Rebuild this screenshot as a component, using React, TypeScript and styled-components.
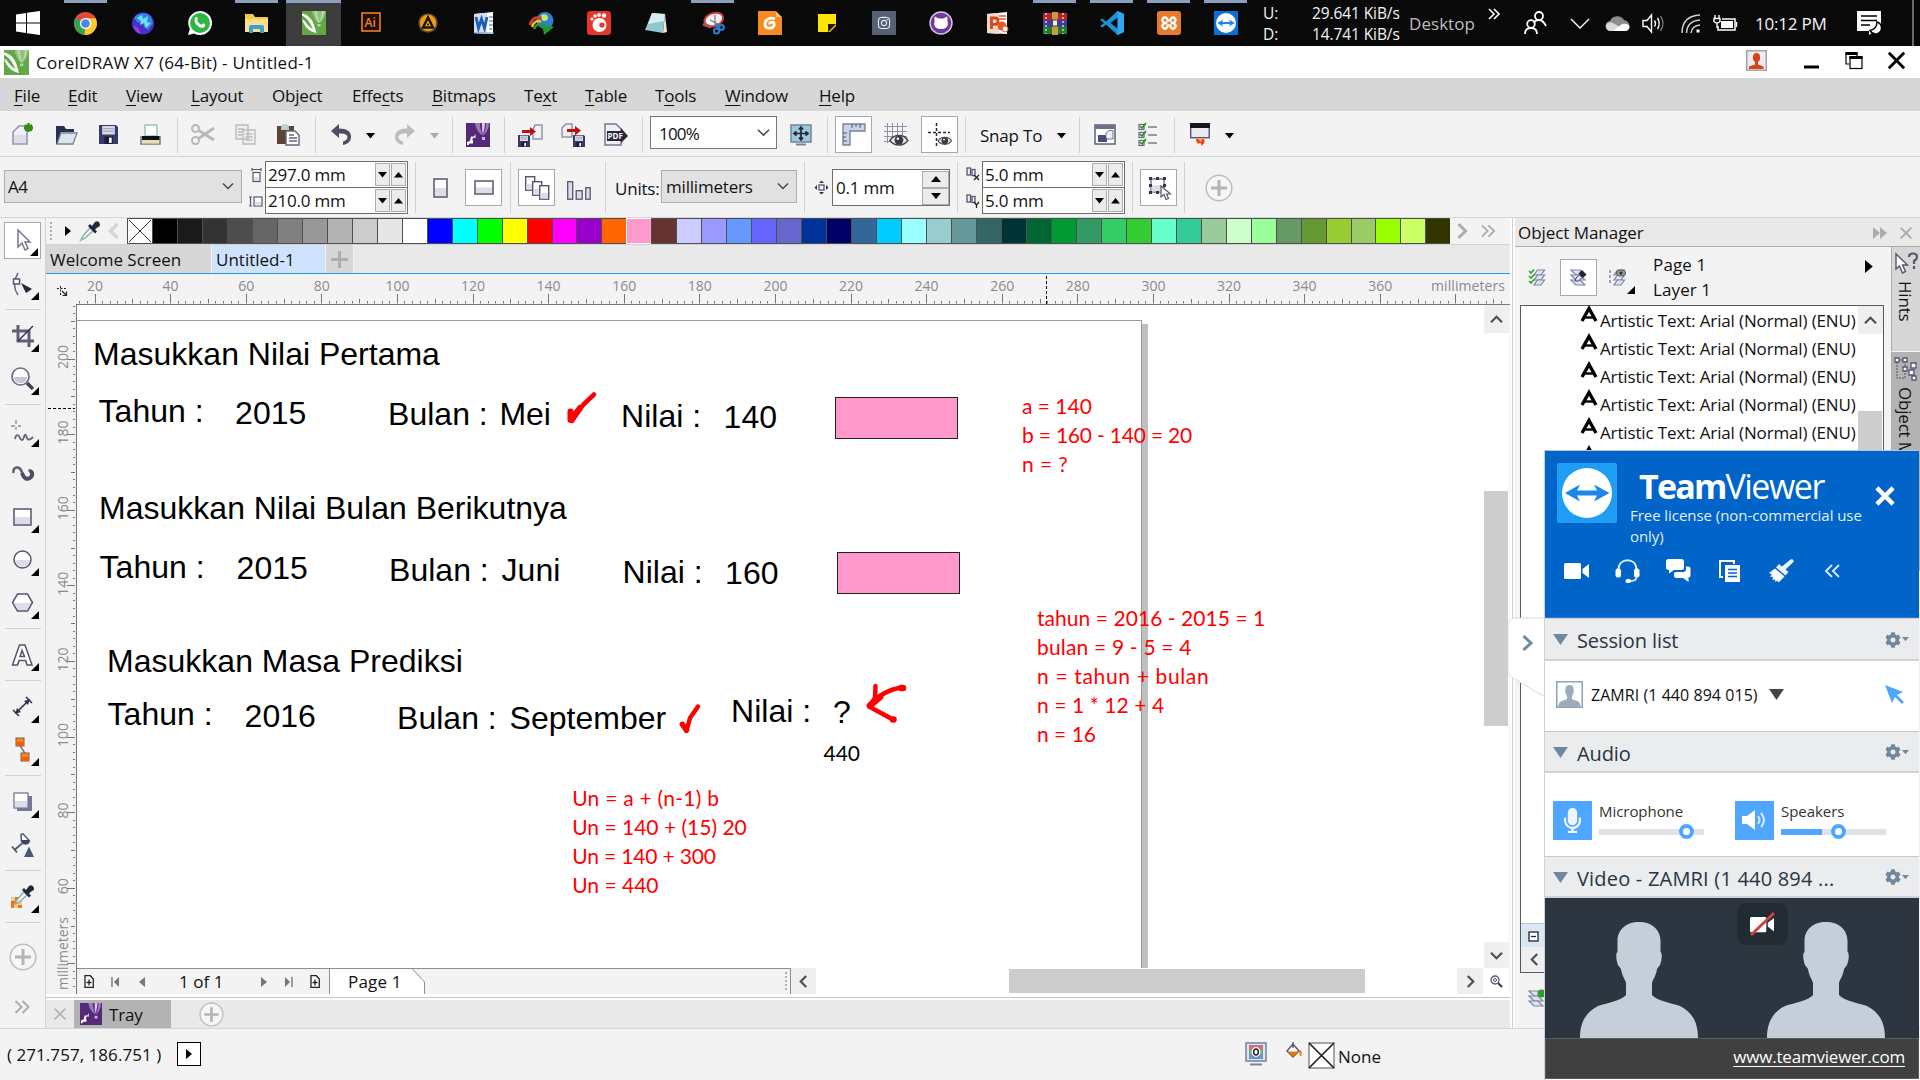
import React from "react";
import styled, { createGlobalStyle, css } from "styled-components";
import { FaCog, FaMicrophone, FaInstagram } from "react-icons/fa";

const Global = createGlobalStyle`
  *, *::before, *::after { box-sizing: border-box; }
  html, body { margin: 0; padding: 0; overflow: hidden; background: #f3f3f3; }
  svg { display: block; flex: none; overflow: visible; }
`;

const UI = `"Open Sans", "Noto Sans", sans-serif`;
const INK = "#55556e";
const PALE = "#dcdde8";

/* ---------- shell ---------- */
const Screen = styled.div`
  position: relative;
  width: 1920px;
  height: 1080px;
  display: flex;
  flex-direction: column;
  font: 17px/24px ${UI};
  color: #111;
  background: #f3f3f3;
  overflow: hidden;
  white-space: nowrap;
`;

const Label = styled.span<{ $w?: number; $ml?: number; $size?: number; $ls?: number; $c?: string; $mt?: number }>`
  flex: none;
  display: block;
  ${p => p.$w !== undefined && css`width: ${p.$w}px;`}
  margin-left: ${p => p.$ml ?? 0}px;
  margin-top: ${p => p.$mt ?? 0}px;
  font-size: ${p => p.$size ?? 17}px;
  letter-spacing: ${p => p.$ls ?? -0.2}px;
  color: ${p => p.$c ?? "inherit"};
`;

const Slot = styled.span<{ $w: number; $ml?: number; $mt?: number }>`
  position: relative;
  flex: none;
  width: ${p => p.$w}px;
  margin-left: ${p => p.$ml ?? 0}px;
  margin-top: ${p => p.$mt ?? 0}px;
  display: flex;
  align-items: center;
  justify-content: center;
`;

/* ---------- taskbar ---------- */
const Taskbar = styled.header`
  flex: none;
  height: 46px;
  display: flex;
  align-items: center;
  background: #090909;
  color: #f4f4f4;
`;
const TaskCell = styled.div<{ $open?: boolean; $active?: boolean }>`
  flex: none;
  width: ${p => (p.$active ? 55 : 43)}px;
  margin: 0 ${p => (p.$active ? 1 : 7)}px;
  height: 46px;
  display: flex;
  align-items: center;
  justify-content: center;
  background: ${p => (p.$active ? "#3c3c3c" : "transparent")};
  border-top: 3px solid ${p => (p.$open || p.$active ? "#8aa0bd" : "transparent")};
  padding-bottom: 3px;
`;
const NetCol = styled.div<{ $ml: number; $w: number }>`
  flex: none;
  margin-left: ${p => p.$ml}px;
  width: ${p => p.$w}px;
  display: flex;
  flex-direction: column;
  font-size: 15.5px;
  line-height: 21px;
  letter-spacing: -0.1px;
  margin-top: 2px;
`;
const ShowDesk = styled.div`
  width: 2px;
  height: 46px;
  margin-left: 30px;
  background: #6a6a6a;
`;

/* ---------- title and menu ---------- */
const TitleBar = styled.div`
  flex: none;
  height: 32px;
  padding-left: 4px;
  display: flex;
  align-items: center;
  background: #fff;
`;
const Spring = styled.div`
  flex: 1;
`;
const MenuBar = styled.nav`
  flex: none;
  height: 33px;
  padding: 2px 0 0 14px;
  display: flex;
  align-items: center;
  background: #d7d7d7;
  u { text-underline-offset: 3px; text-decoration-thickness: 1px; }
`;

/* ---------- toolbars ---------- */
const Bar = styled.div<{ $h: number; $pt: number }>`
  flex: none;
  height: ${p => p.$h}px;
  padding-top: ${p => p.$pt}px;
  display: flex;
  align-items: center;
  border-bottom: 1px solid #d6d6d6;
  background: #f3f3f3;
`;
const Sep = styled.i<{ $ml: number; $h?: number }>`
  flex: none;
  width: 1px;
  height: ${p => p.$h ?? 36}px;
  margin-left: ${p => p.$ml}px;
  background: #d2d2d2;
`;
const Pressed = styled.span<{ $ml?: number }>`
  flex: none;
  width: 37px;
  height: 37px;
  margin-left: ${p => p.$ml ?? 0}px;
  display: flex;
  align-items: center;
  justify-content: center;
  background: #fff;
  border: 1px solid #a9a9a9;
`;
const Combo = styled.div<{ $w: number; $ml: number; $white?: boolean; $pad: number }>`
  flex: none;
  width: ${p => p.$w}px;
  height: 33px;
  margin-left: ${p => p.$ml}px;
  margin-top: ${p => (p.$white ? -4 : -3)}px;
  padding: 0 ${p => (p.$white ? 7 : 8)}px 0 ${p => p.$pad}px;
  display: flex;
  align-items: center;
  justify-content: space-between;
  border: 1px solid ${p => (p.$white ? "#777" : "#adadad")};
  background: ${p => (p.$white ? "#fff" : "#e1e1e1")};
`;
const Pair = styled.div`
  flex: none;
  width: 143px;
  height: 53px;
  margin-left: 2px;
  display: flex;
  flex-direction: column;
  border: 1px solid #6e6e6e;
  background: #fff;
`;
const PairRow = styled.div`
  flex: 1;
  display: flex;
  align-items: center;
  padding: 0 1px 0 2px;
  & + & { border-top: 1px solid #6e6e6e; }
`;
const Spin = styled.span<{ $w: number; $h: number }>`
  flex: none;
  width: ${p => p.$w}px;
  height: ${p => p.$h}px;
  margin-left: 1px;
  display: flex;
  align-items: center;
  justify-content: center;
  background: #ececec;
  border: 1px solid #adadad;
`;
const IconPairCol = styled.div<{ $ml: number }>`
  flex: none;
  width: 14px;
  height: 53px;
  margin-left: ${p => p.$ml}px;
  display: flex;
  flex-direction: column;
  justify-content: space-around;
  align-items: center;
`;
const NudgeBox = styled.div`
  flex: none;
  width: 118px;
  height: 37px;
  margin-left: 4px;
  padding: 0 0 0 3px;
  display: flex;
  align-items: center;
  justify-content: space-between;
  border: 1px solid #6e6e6e;
  background: #fff;
`;
const SpinCol = styled.div`
  display: flex;
  flex-direction: column;
`;

/* ---------- workspace ---------- */
const Work = styled.main`
  flex: none;
  height: 811px;
  display: flex;
  border-bottom: 1px solid #d6d6d6;
`;
const Toolbox = styled.aside`
  flex: none;
  width: 46px;
  padding-top: 1px;
  display: flex;
  flex-direction: column;
  align-items: center;
  border-right: 1px solid #d2d2d2;
`;
const ToolCell = styled.div<{ $on?: boolean }>`
  position: relative;
  flex: none;
  width: 37px;
  height: 37px;
  margin: 3px 0;
  display: flex;
  align-items: center;
  justify-content: center;
  ${p => p.$on && css`background: #fff; border: 1px solid #a9a9a9;`}
`;
const Flyout = styled.i<{ $r?: number; $b?: number }>`
  position: absolute;
  right: ${p => p.$r ?? 2}px;
  bottom: ${p => p.$b ?? 2}px;
  border-style: solid;
  border-width: 0 0 8px 8px;
  border-color: transparent transparent #000 transparent;
`;
const ToolSep = styled.i`
  flex: none;
  width: 36px;
  height: 9px;
  border: solid #f3f3f3;
  border-width: 4px 0;
  background: #d2d2d2;
`;
const Center = styled.section`
  flex: none;
  width: 1464px;
  display: flex;
  flex-direction: column;
`;
const Palette = styled.div`
  flex: none;
  height: 27px;
  display: flex;
  align-items: center;
  border-bottom: 1px solid #d2d2d2;
`;
const Swatches = styled.div`
  flex: none;
  width: 1323px;
  height: 26px;
  margin-left: 7px;
  display: flex;
  border: solid #4f4f4f;
  border-width: 1px 0;
`;
const Swatch = styled.span<{ $c: string; $sel?: boolean }>`
  flex: 1;
  height: 24px;
  background: ${p => p.$c};
  border-left: 1px solid ${p => (p.$sel ? "#fff" : "#4f4f4f")};
  ${p => p.$sel && css`box-shadow: 1px 0 0 #fff, 0 1px 0 #fff, 0 -1px 0 #fff;`}
`;
const Tabs = styled.div`
  flex: none;
  height: 29px;
  display: flex;
  align-items: stretch;
  background: #e9e9e9;
  border-bottom: 1px solid #1f9fea;
`;
const Tab = styled.div<{ $w: number; $bg: string; $pad?: number }>`
  flex: none;
  width: ${p => p.$w}px;
  padding-left: ${p => p.$pad ?? 4}px;
  padding-top: 1px;
  display: flex;
  align-items: center;
  background: ${p => p.$bg};
  border-right: 1px solid #f3f3f3;
`;
const RulerRow = styled.div`
  flex: none;
  height: 31px;
  display: flex;
`;
const Body = styled.div`
  flex: none;
  height: 689px;
  display: flex;
`;
const VRuler = styled.div`
  flex: none;
  width: 31px;
  border-right: 1px solid #777;
`;
const View = styled.div`
  flex: none;
  width: 1432px;
  display: flex;
  flex-direction: column;
`;
const CanvasRow = styled.div`
  flex: none;
  height: 663px;
  display: flex;
`;
const Canvas = styled.div`
  position: relative;
  width: 1407px;
  background: #fff;
  overflow: hidden;
`;
const Page = styled.div`
  position: absolute;
  left: -2px;
  top: 15px;
  width: 1067px;
  height: 700px;
  border: 1px solid #999;
  box-shadow: 6px 4px 0 #bfbfbf;
  background: #fff;
`;
const Art = styled.div<{ $x: number; $y: number }>`
  position: absolute;
  left: ${p => p.$x - 76.4}px;
  top: ${p => p.$y - 332}px;
  font: 32px/32px "Liberation Sans", Arial, sans-serif;
  color: #000;
`;
const Note = styled.div<{ $x: number; $y: number; $ls?: number; $black?: boolean }>`
  position: absolute;
  left: ${p => p.$x - 77}px;
  top: ${p => p.$y - 328.5}px;
  font: 21px/29px Lato, sans-serif;
  letter-spacing: ${p => p.$ls ?? 0}px;
  color: ${p => (p.$black ? "#000" : "#ff0000")};
`;
const Box = styled.div<{ $x: number; $y: number }>`
  position: absolute;
  left: ${p => p.$x - 77}px;
  top: ${p => p.$y - 305}px;
  width: 123px;
  height: 42px;
  background: #ff99cc;
  border: 1px solid #222;
`;
const Ink = styled.svg`
  position: absolute;
  left: -77px;
  top: -305px;
`;
const VScroll = styled.div<{ $w: number }>`
  flex: none;
  width: ${p => p.$w}px;
  display: flex;
  flex-direction: column;
  background: #fff;
`;
const ScrollBtn = styled.span<{ $w: number; $h: number }>`
  flex: none;
  width: ${p => p.$w}px;
  height: ${p => p.$h}px;
  display: flex;
  align-items: center;
  justify-content: center;
  background: #efefef;
`;
const Thumb = styled.i<{ $w: number; $h: number; $ml?: number; $mt?: number }>`
  flex: none;
  width: ${p => p.$w}px;
  height: ${p => p.$h}px;
  margin-left: ${p => p.$ml ?? 0}px;
  margin-top: ${p => p.$mt ?? 0}px;
  background: #cdcdcd;
`;
const BottomRow = styled.div`
  flex: none;
  height: 26px;
  display: flex;
  align-items: center;
  background: #fff;
`;
const PageNav = styled.div`
  flex: none;
  width: 714px;
  height: 26px;
  display: flex;
  align-items: center;
  background: #f3f3f3;
  border: solid #8f8f8f;
  border-width: 1px 1px 0 0;
`;
const PageTab = styled.div`
  flex: none;
  width: 96px;
  height: 25px;
  margin-left: 9px;
  padding-left: 18px;
  display: flex;
  align-items: center;
  background: #fff;
  clip-path: polygon(0 0, 84px 0, 100% 13px, 100% 100%, 0 100%);
  border-left: 1px solid #8f8f8f;
`;
const PageEdge = styled.svg`
  position: relative;
  margin-left: -13px;
`;
const Grip = styled.i`
  flex: none;
  width: 2px;
  height: 19px;
  margin-right: 3px;
  background: repeating-linear-gradient(#b0b0b0 0 2px, transparent 2px 4px);
`;
const Rule = styled.i`
  flex: none;
  height: 6px;
  border: solid #fff;
  border-width: 3px 0 2px;
  background: #c4c4c4;
`;
const Tray = styled.div`
  flex: none;
  height: 28px;
  display: flex;
  align-items: center;
  background: #e9e9e9;
`;
const TrayTab = styled.div`
  flex: none;
  width: 97px;
  height: 28px;
  margin-left: 8px;
  padding-left: 6px;
  display: flex;
  align-items: center;
  background: #b3b3b3;
`;

/* ---------- docker ---------- */
const Split = styled.i`
  flex: none;
  width: 5px;
  border: solid #fff;
  border-width: 0 2px;
  background: #d0d0d0;
`;
const Docker = styled.aside`
  flex: none;
  width: 405px;
  display: flex;
  flex-direction: column;
`;
const DockHead = styled.div`
  flex: none;
  height: 29px;
  padding: 2px 8px 0 3px;
  display: flex;
  align-items: center;
  background: #e9e9e9;
  border-bottom: 1px solid #adadad;
`;
const DockBody = styled.div`
  flex: 1;
  display: flex;
`;
const DockMain = styled.div`
  flex: none;
  width: 376px;
  display: flex;
  flex-direction: column;
`;
const DockTools = styled.div`
  flex: none;
  height: 58px;
  padding: 3px 0 0 14px;
  display: flex;
  align-items: center;
`;
const PageInfo = styled.div`
  flex: none;
  width: 212px;
  margin-left: 19px;
  margin-top: -1px;
  display: flex;
  flex-direction: column;
  gap: 1px;
  line-height: 24px;
`;
const ListBox = styled.div`
  flex: none;
  width: 364px;
  height: 668px;
  margin-left: 5px;
  display: flex;
  border: 1px solid #5a5a5a;
  background: #fff;
`;
const ListCol = styled.div`
  width: 337px;
  display: flex;
  flex-direction: column;
`;
const ListRow = styled.div`
  flex: none;
  height: 28px;
  padding-left: 60px;
  display: flex;
  align-items: center;
`;
const GroupRow = styled.div`
  flex: none;
  height: 24px;
  padding: 6px 0 0 7px;
  background: #d9e6f3;
  border-top: 1px solid #b5c6d8;
`;
const HScrollRow = styled.div`
  flex: none;
  height: 25px;
  background: #efefef;
`;
const DockFoot = styled.div`
  flex: 1;
  padding: 17px 0 0 13px;
`;
const SideTabs = styled.div`
  flex: none;
  width: 29px;
  display: flex;
  flex-direction: column;
`;
const SideTab = styled.div<{ $h: number; $on?: boolean }>`
  flex: none;
  height: ${p => p.$h}px;
  padding-top: 6px;
  display: flex;
  flex-direction: column;
  align-items: center;
  gap: 7px;
  overflow: hidden;
  background: ${p => (p.$on ? "#b3b3b3" : "#d7d7d7")};
  border-left: 1px solid #adadad;
  border-bottom: 1px solid #f3f3f3;
`;
const Upright = styled.span`
  writing-mode: vertical-rl;
  letter-spacing: -0.2px;
  line-height: 24px;
  margin-right: 2px;
`;

/* ---------- status ---------- */
const Status = styled.footer`
  flex: 1;
  padding-left: 7px;
  padding-top: 1px;
  display: flex;
  align-items: center;
`;
const PlayBox = styled.span`
  flex: none;
  width: 24px;
  height: 24px;
  display: flex;
  align-items: center;
  justify-content: center;
  border: 1px solid #000;
  background: #fff;
  margin-top: -2px;
`;

/* ---------- TeamViewer window ---------- */
const Tv = styled.div`
  position: absolute;
  left: 1544px;
  top: 450px;
  width: 375px;
  height: 630px;
  display: flex;
  flex-direction: column;
  background: #fff;
  border-left: 1px solid #c9d2da;
  border-top: 1px solid #a9c6e4;
`;
const TvHandle = styled.svg`
  position: absolute;
  left: 1507px;
  top: 617px;
`;
const TvTop = styled.div`
  flex: none;
  height: 167px;
  padding: 12px 12px 0 12px;
  background: #0064c8;
  border-bottom: 1px solid #2a7fd6;
  color: #fff;
`;
const TvBrand = styled.div`
  display: flex;
  align-items: flex-start;
`;
const TvNames = styled.div`
  width: 245px;
  margin-left: 13px;
  display: flex;
  flex-direction: column;
`;
const TvName = styled.div`
  margin: 5px 0 0 9px;
  font: 34px/36px ${UI};
  letter-spacing: -1.5px;
  height: 37px;
  b { font-weight: 700; letter-spacing: -1.8px; }
`;
const TvLicense = styled.div`
  font-size: 15px;
  line-height: 21px;
  letter-spacing: -0.05px;
  white-space: normal;
  width: 250px;
  color: #e4eefa;
`;
const TvTools = styled.div`
  display: flex;
  align-items: center;
  height: 26px;
  margin-top: 11px;
  padding-left: 7px;
`;
const TvHead = styled.div<{ $h: number }>`
  flex: none;
  height: ${p => p.$h}px;
  padding: 1px 10px 0 8px;
  display: flex;
  align-items: center;
  background: #eaecee;
  border-top: 1px solid #c6ccd2;
  border-bottom: 2px solid #cdd2d6;
`;
const TvSession = styled.div`
  flex: none;
  height: 70px;
  padding: 0 15px 3px 11px;
  display: flex;
  align-items: center;
`;
const TvAudio = styled.div`
  flex: none;
  height: 83px;
  padding: 11px 0 0 8px;
  display: flex;
  align-items: center;
`;
const Tile = styled.div`
  flex: none;
  width: 39px;
  height: 39px;
  display: flex;
  align-items: center;
  justify-content: center;
  background: #4fa6ff;
`;
const SliderCol = styled.div<{ $mr: number }>`
  width: 105px;
  margin: -6px ${p => p.$mr}px 0 7px;
  display: flex;
  flex-direction: column;
  color: #333;
`;
const Track = styled.div<{ $fill: number; $at: number }>`
  height: 6px;
  margin-top: 6px;
  display: flex;
  align-items: center;
  background: linear-gradient(90deg, #4fa6ff ${p => p.$fill}px, #dfe3e8 ${p => p.$fill}px);
  &::after {
    content: "";
    width: 15px;
    height: 15px;
    margin-left: ${p => p.$at}px;
    margin-top: -1px;
    border-radius: 50%;
    background: #fff;
    border: 4.5px solid #4fa6ff;
  }
`;
const TvVideo = styled.div`
  position: relative;
  flex: none;
  height: 140px;
  padding: 24px 34px 0 35px;
  display: flex;
  justify-content: space-between;
  background: #2d3640;
`;
const CamOff = styled.div`
  position: absolute;
  left: 192px;
  top: 5px;
  width: 51px;
  height: 42px;
  border-radius: 9px;
  display: flex;
  align-items: center;
  justify-content: center;
  background: #222a32;
`;
const TvFoot = styled.div`
  flex: none;
  height: 41px;
  padding: 0 13px 4px 0;
  display: flex;
  align-items: center;
  justify-content: flex-end;
  color: #fff;
  background: #404040;
  border: 1px solid #5a5a5a;
  u { text-underline-offset: 3px; text-decoration-thickness: 1px; }
`;

/* ---------- icons ---------- */
type P = { w: number; h: number; vb?: string; children: React.ReactNode };
const G = ({ w, h, vb, children }: P) => (
  <svg width={w} height={h} viewBox={vb ?? `0 0 ${w} ${h}`} fill="none">{children}</svg>
);
const Tri = ({ d = "down", s = 9, c = "#000" }: { d?: string; s?: number; c?: string }) => {
  const pts: Record<string, string> = { down: "0,0 10,0 5,6", up: "0,6 10,6 5,0", right: "0,0 6,5 0,10", left: "6,0 0,5 6,10" };
  const v = d === "down" || d === "up";
  return <G w={v ? s : s * 0.6} h={v ? s * 0.6 : s} vb={v ? "0 0 10 6" : "0 0 6 10"}><polygon points={pts[d]} fill={c} /></G>;
};
const WideTri = ({ c }: { c: string }) => <G w={15} h={11}><path d="M0 0h15L7.500 11z" fill={c} /></G>;
const Chev = ({ d = "down", s = 10, c = "#444", t = 1.4 }: { d?: string; s?: number; c?: string; t?: number }) => {
  const r: Record<string, number> = { down: 0, up: 180, left: 90, right: 270 };
  return <G w={s} h={s} vb="0 0 10 10"><path d="M0 2.5 5 7.5 10 2.5" stroke={c} strokeWidth={t} transform={`rotate(${r[d]} 5 5)`} /></G>;
};
const Dbl = ({ w = 15, c = "#adadad", left = false, t = 2 }: { w?: number; c?: string; left?: boolean; t?: number }) => (
  <G w={w} h={14} vb="0 0 16 14"><path d={left ? "M8 1 2 7 8 13M15 1 9 7 15 13" : "M1 1 7 7 1 13M8 1 14 7 8 13"} stroke={c} strokeWidth={t} /></G>
);
const Cross = ({ s = 11, c = "#adadad", t = 2 }: { s?: number; c?: string; t?: number }) => (
  <G w={s} h={s} vb="0 0 10 10"><path d="M.5.5 9.5 9.5M9.5.5.5 9.5" stroke={c} strokeWidth={t} /></G>
);
const PlusRing = ({ s = 28 }: { s?: number }) => (
  <G w={s} h={s} vb="0 0 28 28"><circle cx="14" cy="14" r="12.8" stroke="#c0c0c0" strokeWidth="1.6" fill="#f6f6f6" /><path d="M14 6v16M6 14h16" stroke="#b4b4b4" strokeWidth="3" /></G>
);
const Corel = ({ s = 25, c = "#62a945" }: { s?: number; c?: string }) => (
  <G w={s} h={s} vb="0 0 24 24">
    <rect width="24" height="24" fill={c} />
    <path d="M10 0c1 6 4 10 6 12h2c3-3 5-7 6-12z" fill="#fff" opacity=".3" />
    <path d="M12.500 0c1 5 2 9 4 11.500h1C20 9 21.500 5 22 0h-2c0 4-1 8-2.500 11C16 8 15 4 15 0z" fill="#fff" opacity=".4" />
    <rect x="15.500" y="13" width="3" height="2.500" fill="#fff" opacity=".55" />
    <path d="M0 2.500C6 3.500 10 8 12 14l2.500 8C9 21 4.500 18 1.500 12L0 8.500l2 .8c3 4 5 6.500 9 9C8.500 12 5 7 0 4.500z" fill="#fff" />
  </G>
);
const Connect = ({ s = 24 }: { s?: number }) => (
  <G w={s} h={s} vb="0 0 24 24">
    <rect width="24" height="24" fill="#55297a" />
    <path d="M9 0c1 6 4 10 7 12h2c3-3 5-7 5-12z" fill="#b79bd0" opacity=".7" />
    <path d="M14 0c0 5 1 9 3 12 2-3 3-7 3-12z" fill="#55297a" />
    <path d="M16 0c0 5 0 9 1 11 1-3 2-7 2-11z" fill="#d9c8e8" />
    <rect x="16" y="14" width="3" height="3" fill="#c9b5dc" />
    <path d="M9.500 11v4l-1.500-.5-2 2 1 1v3H3.500L2.500 22H1v-3l3-1 1-4.500h3z" fill="#fff" />
  </G>
);
const DocPage = ({ w = 14, h = 19 }: { w?: number; h?: number }) => (
  <G w={w} h={h}><rect x="1" y="1" width={w - 2} height={h - 2} fill="#fff" stroke={INK} strokeWidth="1.5" /><rect x="2" y={h * 0.5} width={w - 4} height={h * 0.5 - 2} fill={PALE} /></G>
);
const Floppy = ({ s = 19 }: { s?: number }) => (
  <G w={s} h={s} vb="0 0 18 18"><path d="M0 0h16l2 2v16H0z" fill="#3a3a66" /><rect x="3" y="1" width="12" height="8" fill="#d9dae6" /><path d="M4 3.500h10M4 6h10" stroke="#9a9ab5" /><rect x="5" y="11" width="8" height="7" fill="#1b1b3a" /><rect x="9.500" y="12" width="2.500" height="5" fill="#fff" /></G>
);
const Eye = ({ x = 0, y = 0, k = 1 }: { x?: number; y?: number; k?: number }) => (
  <g transform={`translate(${x} ${y}) scale(${k})`}><path d="M0 6C4 0 13 0 17 6 13 12 4 12 0 6z" fill="#e6e6ec" stroke="#444" strokeWidth="1.4" /><circle cx="8.500" cy="5.800" r="4.200" fill="#3a3a44" /><circle cx="7.500" cy="4.500" r="1.200" fill="#fff" /></g>
);
const Gear = () => (
  <Slot $w={24}><FaCog size={16} color="#6f889e" /><Slot $w={7} $ml={1}><Tri s={7} c="#6f889e" /></Slot></Slot>
);
const Cam = ({ w = 25, c = "#fff" }: { w?: number; c?: string }) => (
  <G w={w} h={w * 0.64} vb="0 0 25 16"><rect y="0" width="17" height="16" rx="1.500" fill={c} /><path d="M18.500 6 25 1v14l-6.500-5z" fill={c} /></G>
);
const Headset = () => (
  <G w={25} h={25}>
    <path d="M3.500 11C3.500 4.500 7.500 1.200 12.500 1.200S21.500 4.500 21.500 11" stroke="#dce9f7" strokeWidth="2" />
    <rect x=".5" y="9.500" width="5.500" height="9" rx="2.200" fill="#fff" /><rect x="19" y="9.500" width="5.500" height="9" rx="2.200" fill="#fff" />
    <path d="M21.500 18q0 4-6 4" stroke="#dce9f7" strokeWidth="1.800" /><rect x="10.500" y="20" width="5.500" height="4" rx="1.800" fill="#fff" />
  </G>
);
const Chat = () => (
  <G w={25} h={24}>
    <path d="M2.500 0h13q2.500 0 2.500 2.500v6q0 2.500-2.500 2.500H8l-5 3.500V11q-3 0-3-2.500v-6Q0 0 2.500 0z" fill="#fff" />
    <path d="M20 7.500h2.500q2 0 2 2v6.500q0 2.500-2 2.500V23L17 19h-6.500Q8 19 8 16.500V14l1.500-1H17q3 0 3-3z" fill="#fff" />
  </G>
);
const Brush = () => (
  <G w={25} h={24}>
    <path d="M24.500 1.500Q23.500-.5 21.500.5L13 7.500 10 5 7 8.500l9.500 8 3-3.500-3-2.500 7.500-7q1-1 .5-2z" fill="#e9f2fb" />
    <path d="M6 9.500 15.500 17.500 9.500 23.500 8.500 21.500 6.500 23 6 20.500 3.500 21 4 18 1 17.500 3 15.500 0 14z" fill="#fff" />
  </G>
);
const Person = ({ w, h, c }: { w: number; h: number; c: string }) => (
  <G w={w} h={h} vb="0 0 118 116">
    <path d="M59 0C46 0 37 8 37.500 20v10c-2 1-1.500 8 .5 13l3 4c1 7 4 10 5 14v12c-4 5-18 8-28 11C6 90 0 100 0 116h118c0-16-6-26-18-32-10-3-24-6-28-11V61c1-4 4-7 5-14l3-4c2-5 2.500-12 .5-13V20C81 8 72 0 59 0z" fill={c} />
  </G>
);
const TvLogo = ({ s, bg = "#1f9df5" }: { s: number; bg?: string }) => (
  <G w={s} h={s} vb="0 0 60 60">
    <rect width="60" height="60" rx="2" fill={bg} /><circle cx="30" cy="30" r="25" fill="#fff" />
    <path d="M8 30 23 21.500 20 27.500H40L37 21.500 52.500 30 37 38.500 40 32.500H20L23 38.500z" fill="#1c86ee" />
  </G>
);
const PageAdd = () => (
  <G w={10} h={13}><path d="M1 .7h5.300L9.300 4v8.300H1z" stroke="#222" strokeWidth="1.300" fill="#fff" /><path d="M5 4.500v6M2.500 7.500h5" stroke="#222" strokeWidth="1.300" /></G>
);
const Layers = ({ kind }: { kind: string }) => (
  <G w={17} h={17}>
    {[0, 5, 10].map(y => <path key={y} d={kind === "edit" || kind === "add" ? `M1 ${y + 1}h9l5 5H6z` : `M8.500 ${y + 1}h7l-3.500 5H5z`} fill="#e0e2f0" stroke="#7c82a4" strokeWidth="1.200" />)}
    {kind === "check" && [1, 6, 11].map(y => <path key={y} d={`M0 ${y + 1}l2 2 3-3.500`} stroke="#2fa52f" strokeWidth="1.700" />)}
    {kind === "edit" && <><path d="M5.500 12 6 9l3.500-3 2.500 2.500L8.500 12z" fill="#eef" stroke="#33334d" /><path d="M8.500 4.500 12 1l4.500 4.500L13 9z" fill="#23233a" /></>}
    {kind === "eye" && <><path d="M1 1v15" stroke="#77778f" strokeWidth="1.300" strokeDasharray="3 2" /><ellipse cx="12" cy="4" rx="4.500" ry="3" fill="#999" stroke="#555" /><circle cx="12" cy="4" r="1.600" fill="#333" /></>}
    {kind === "add" && <circle cx="13.500" cy="3.500" r="4" fill="#2f9a2f" />}
  </G>
);

const taskIcons: { n: string; open?: boolean; active?: boolean; el: React.ReactNode }[] = [
  { n: "chrome", open: true, el: <G w={23} h={23} vb="0 0 24 24"><circle cx="12" cy="12" r="12" fill="#e04a3a" /><path d="M12 12 1.600 6A12 12 0 0 0 11 24z" fill="#32a350" /><path d="M12 12 11 24A12 12 0 0 0 22.500 6.500H12z" fill="#fbcb2e" /><circle cx="12" cy="12" r="5.800" fill="#fff" /><circle cx="12" cy="12" r="4.500" fill="#4a86e8" /></G> },
  { n: "globe", el: <G w={22} h={23}><circle cx="11" cy="11.500" r="11" fill="#4b2fc4" /><path d="M2 6C7 0 15 0 19 5l2 6-5 7-4-3-1-5-5 1z" fill="#2f86ea" /><path d="M5 6l5-3 1 4 5-3-1 6 4 1-5 5-2-5-4 2 1-4z" fill="#6fe0f4" /><path d="M1 13l5 3 3 6q-6-2-8-9z" fill="#a43be4" /></G> },
  { n: "wa", el: <G w={24} h={24}><path d="M12 0a12 12 0 0 1 0 24c-2 0-4-.5-6-1.500L0 24l1.800-6A12 12 0 0 1 12 0z" fill="#fff" /><circle cx="12" cy="12" r="10" fill="#2bb741" /><path d="M7 7c1-2 2.500-1 3 .8l-1 1.800c1 2 2.500 3.300 4.500 4.200l1.500-1.500c2 .5 3 1.500 2 3-2 2.500-5 1.500-7.500-.5S6 10 7 7z" fill="#fff" /></G> },
  { n: "files", open: true, el: <G w={23} h={21}><path d="M0 1h8l2 3h13v15H0z" fill="#f5c84c" /><path d="M0 6h23v13H0z" fill="#ffe08a" /><path d="M4 20v-6q0-2 2-2h11q2 0 2 2v6h-4v-4H8v4z" fill="#3aa0dc" /></G> },
  { n: "corel", active: true, el: <Corel s={24} /> },
  { n: "ai", el: <G w={20} h={20}><rect x="1" y="0" width="18" height="18" stroke="#f08020" strokeWidth="1.600" fill="#1e0f02" /><text x="3.500" y="13.500" fontSize="12" fontWeight="600" fontFamily="Open Sans, sans-serif" fill="#f08020">Ai</text></G> },
  { n: "aimp", el: <G w={20} h={20}><circle cx="10" cy="10" r="9" fill="#ef9a14" stroke="#5a4a30" strokeWidth="1.500" /><path d="M10 4.500 15 14.500H5z" stroke="#1b1408" strokeWidth="2.400" /><circle cx="10" cy="11.500" r="1" fill="#1b1408" /></G> },
  { n: "word", el: <G w={23} h={23}><path d="M1 2 20 0v22L1 21z" fill="#fff" /><path d="M1 2 14 1v21L1 21z" fill="#cfe0f4" /><path d="M3 5 5.500 16 8.500 7 11.500 16 14 5" stroke="#1d5cb0" strokeWidth="2.800" /><path d="M16 5h4M16 9h4M16 13h4M16 17h3" stroke="#6d9bd1" strokeWidth="1.500" /><path d="M1 21h20" stroke="#6d9bd1" /></G> },
  { n: "idm", el: <G w={24} h={22}><circle cx="15" cy="8.500" r="8.500" fill="#2f7fd6" /><path d="M11 3c4-2 7 0 7 3s-4 4-6 2z" fill="#cfe65a" /><path d="M0 13C2 6 7 4 11 7" stroke="#e03a2a" strokeWidth="2.800" /><path d="M2 15C4 9 8 8 11 10" stroke="#f4c02a" strokeWidth="2.400" /><path d="M4 17q2-5 7-5" stroke="#2f9a2a" strokeWidth="2.400" /><path d="M10 12h5l2 4 1-3 6 2-10 8-1-6z" fill="#1f9a2a" /></G> },
  { n: "gom", el: <G w={24} h={24}><rect width="24" height="24" rx="3.500" fill="#e8352a" /><circle cx="12.500" cy="14" r="7" fill="#fff" /><circle cx="15" cy="14" r="2.600" fill="#e8352a" /><circle cx="5" cy="8" r="1.600" fill="#fff" /><circle cx="8" cy="5" r="1.700" fill="#fff" /><circle cx="12" cy="4" r="1.900" fill="#fff" /><circle cx="17" cy="4.500" r="2.200" fill="#fff" /></G> },
  { n: "note", el: <G w={24} h={22}><path d="M8 1 21 2 19 21 1 18z" fill="#8fc7cf" /><path d="M8 1 21 2 20 9 4 12z" fill="#d7eef0" /><path d="M21 2 23 20 19 21z" fill="#f4e6cf" /></G> },
  { n: "snip", open: true, el: <G w={24} h={23}><ellipse cx="13" cy="7.500" rx="9.500" ry="6.500" fill="#f3f3f6" stroke="#d23a3a" strokeWidth="2" transform="rotate(-18 13 8)" /><path d="M2 12 10 15" stroke="#a55" strokeWidth="3" /><path d="M14 3v10M9 8l8 4" stroke="#777" strokeWidth="1.200" /><path d="M15 12l1 4M15 13l4 1" stroke="#2c7fd0" strokeWidth="2" /><circle cx="15.500" cy="19" r="2.600" stroke="#2c7fd0" strokeWidth="2" /><circle cx="20.500" cy="15.500" r="2.400" stroke="#2c7fd0" strokeWidth="2" /></G> },
  { n: "g", el: <G w={24} h={24}><path d="M0 0h18l6 6v18H0z" fill="#f68b1f" /><path d="M18 0v6h6z" fill="#ffc078" /><path d="M18 0h6v6z" fill="#090909" /><path d="M17 8c-5-2-10 0-10 5.500 0 4 6 5 8.500 2 1-1.500 1-3 0-4-2-1-4 0-4 2" stroke="#fff" strokeWidth="2.800" /></G> },
  { n: "sticky", el: <G w={18} h={18}><path d="M0 0h18v10h-8v8H0z" fill="#ffe500" /><path d="M10 18v-8h8z" fill="#1a1a1a" /><path d="M10 18 18 10v2l-6 6z" fill="#e8c800" /></G> },
  { n: "insta", el: <G w={24} h={24}><rect width="24" height="24" fill="#566273" /><g transform="translate(5 5)"><FaInstagram size={14} color="#e9ecf0" /></g></G> },
  { n: "github", el: <G w={24} h={24}><circle cx="12" cy="12" r="11" fill="#713a9a" stroke="#d7c8e4" strokeWidth="1.400" /><path d="M6 5.500 9.500 7.500h5L18 5.500q1 2 .3 4c2 6-1.300 8.500-6.300 8.500S4 15.500 5.700 9.500q-.7-2 .3-4z" fill="#fff" /></G> },
  { n: "ppt", el: <G w={23} h={23}><path d="M1 2 21 0v22L1 21z" fill="#fff" /><path d="M1 2 13 1v21L1 21z" fill="#f6d6c4" /><path d="M5.500 17V6h3.500q3 0 3 3.200t-3 3.200H6" stroke="#d2491c" strokeWidth="2.800" /><circle cx="16" cy="14" r="4.500" fill="#e2582a" /><circle cx="19" cy="17" r="3" fill="#fff" stroke="#e2582a" /><path d="M13 4h7M13 7h7" stroke="#e2582a" strokeWidth="1.500" /></G> },
  { n: "rar", open: true, el: <G w={24} h={23}><rect y="1" width="24" height="7" fill="#b5203a" /><rect y="8" width="24" height="7" fill="#3b3f9a" /><rect y="15" width="24" height="7" fill="#1f7a3a" /><rect x="9" y="0" width="6" height="23" fill="#c99b3a" /><rect x="9.500" y="8" width="5" height="6" fill="#eee" stroke="#444" /><path d="M3 1v21M20 1v21" stroke="#e8d48a" strokeWidth="1.500" strokeDasharray="2 2" /></G> },
  { n: "code", open: true, el: <G w={24} h={24}><path d="M17.500 0 24 3v18l-6.500 3L6 13.500 2.500 16.500 0 15.300 4 12 0 8.700 2.500 7.500 6 10.500zM17.800 6.500 10.500 12l7.300 5.500z" fill="#1f8fd6" fillRule="evenodd" /><path d="M17.500 0 24 3v18l-6.500 3z" fill="#2fa8f0" /></G> },
  { n: "xampp", open: true, el: <G w={24} h={24}><rect width="24" height="24" rx="3" fill="#e87a2a" /><path d="M8.500 6.500a2.500 2.500 0 0 0-2 4.500l2 1-2 1a2.500 2.500 0 0 0 3 4q1-.5 1-2.500h3q0 2 1 2.500a2.500 2.500 0 0 0 3-4l-2-1 2-1a2.500 2.500 0 0 0-3-4q-1 .5-1 2.500h-3q0-2-1-2.500z" stroke="#fff" strokeWidth="2.400" /></G> },
  { n: "tv", open: true, el: <TvLogo s={24} bg="#0a6fd6" /> },
];

const Arrow = ({ flip = false, c = "#4d4d63" }: { flip?: boolean; c?: string }) => (
  <G w={21} h={21}><g transform={flip ? "translate(21 0) scale(-1 1)" : undefined}><path d="M0 7 8 0v4.500c8 0 12 3 12 8.500 0 4-3 7-8 8v-3.500c3-1 4.500-2.500 4.500-4.500 0-2.500-3-3.800-8.500-3.500V14z" fill={c} /></g></G>
);
const Pipette = ({ s = 20, tip = "#8fb5b0" }: { s?: number; tip?: string }) => (
  <G w={s} h={s} vb="0 0 20 20"><path d="M1 19 3 15 10 7 13 10 5 17z" fill="#fff" stroke={tip} strokeWidth="1.600" /><path d="M8 5 10 3 12 5 15 1q3-2 4.500 1T18 6l-3 2.500 2 2-2 2z" fill="#26263c" /></G>
);

const tools: (null | { el: React.ReactNode; fly?: boolean; on?: boolean })[] = [
  { on: true, fly: true, el: <G w={14} h={23}><path d="M2 1v17l4-4 3 7 3-1.500-3-6.500h5z" fill="#fff" stroke="#77778f" strokeWidth="1.500" /></G> },
  { fly: true, el: <G w={22} h={24}><path d="M6 1C1 9 2 17 6 23" stroke="#66667e" strokeWidth="1.500" /><rect x="1.500" y="7" width="6" height="5" fill="#fff" stroke={INK} strokeWidth="1.500" /><path d="M9 11l11 6-6 4z" fill="#26263c" /></G> },
  null,
  { fly: true, el: <G w={22} h={22}><path d="M0 6h17v16M6 0v16h16" stroke="#5f6078" strokeWidth="3" /><path d="M21 1 6 16" stroke="#33334d" strokeWidth="1.500" /></G> },
  { fly: true, el: <G w={24} h={24}><circle cx="9.500" cy="9.500" r="8.500" fill="#fff" stroke="#6d6d84" strokeWidth="1.700" /><path d="M3 10h13c0 8-13 8-13 0z" fill="#c5c6d8" /><path d="M16 16l6 6" stroke="#44445a" strokeWidth="3.500" /></G> },
  null,
  { fly: true, el: <G w={24} h={22}><path d="M5 0v4M5 7v3M0 6h4M7 6h3" stroke="#8a8aa0" strokeWidth="1.300" /><path d="M4 19c1-6 4-4 5-1s3 3 4-1 2-2 3 1 4 1 6-1" stroke="#66667e" strokeWidth="1.900" /></G> },
  { el: <G w={22} h={16}><path d="M1.500 7c-1-7 6-7 8-2s3 8 7 7 4-7 0-8" stroke="#5f5f75" strokeWidth="2.600" /><path d="M10 7c2 6 5 7 8 5s3-6 0-7" stroke="#4d4d63" strokeWidth="3.800" /></G> },
  { fly: true, el: <DocPage w={19} h={18} /> },
  { fly: true, el: <G w={19} h={19}><circle cx="9.500" cy="9.500" r="8.500" fill="#fff" stroke={INK} strokeWidth="1.500" /><path d="M2 10h15c-1 9-14 9-15 0z" fill={PALE} /></G> },
  { fly: true, el: <G w={21} h={19}><path d="M5.500 1h10l5 8.500-5 8.500h-10L.5 9.500z" fill="#fff" stroke={INK} strokeWidth="1.500" /><path d="M2 10h17l-4 7H6z" fill={PALE} /></G> },
  null,
  { fly: true, el: <G w={21} h={22}><path d="M7.500 1h5.500l7 20h-5l-1.300-4.500H7L5.500 21h-5zM10 6.500 8 12.500h4.500z" fill="#fff" stroke={INK} strokeWidth="1.500" fillRule="evenodd" /></G> },
  null,
  { fly: true, el: <G w={21} h={21}><path d="M4 17 17 4M1 14l6 6M14 1l6 6" stroke="#33334d" strokeWidth="1.600" /><path d="M3 18l2-6 4 4zM18 3l-2 6-4-4z" fill="#33334d" /></G> },
  { fly: true, el: <G w={15} h={25}><path d="M4 7l7 11" stroke="#77778f" strokeWidth="1.500" /><rect x="1" y="1" width="8" height="8" fill="#ff8c00" stroke="#7a5a6a" /><rect x="2" y="5" width="7" height="4" fill="#ff5a00" /><rect x="6" y="16" width="8" height="8" fill="#ff8c00" stroke="#7a5a6a" /><rect x="7" y="20" width="7" height="4" fill="#ff5a00" /></G> },
  null,
  { fly: true, el: <G w={20} h={20}><rect x="4" y="4" width="15" height="15" fill="#77779a" /><rect x="1" y="1" width="14" height="15" fill="#fff" stroke="#77779a" strokeWidth="1.300" /><rect x="2" y="9" width="12" height="6" fill={PALE} /></G> },
  { el: <G w={24} h={24}><path d="M10 1.500 12 .8 18.500 8q-1 3-4 3T10.500 8.500z" fill="#fff" stroke={INK} strokeWidth="1.500" /><path d="M10.500 7h7.500q0 4-3.500 4T10.500 7z" fill="#33436a" /><path d="M18 13.500 23 24H13z" fill="#4a5878" /><path d="M11 10.500 4 16.500M1 13.500l5 6" stroke={INK} strokeWidth="1.800" /></G> },
  null,
  { fly: true, el: <G w={23} h={24}><rect x="0" y="12" width="11" height="11" fill="#e87810" /><path d="M0 12h4v4H0zM7 16h4v4H7zM3 19h4v4H3z" fill="#f8c890" /><g transform="translate(3 0)"><Pipette /></g></G> },
  null,
];

const swatches = ("#000 #1a1a1a #333 #4d4d4d #666 #808080 #999 #b3b3b3 #ccc #e6e6e6 #fff #00f #0ff #0f0 #ff0 #f00 #f0f #90c #f60 #f9c #633 #ccf #99f #69f #66f #66c #039 #006 #369 #0cf #9ff #9cc #699 #366 #033 #063 #093 #396 #3c6 #3c3 #6fc #3c9 #9c9 #cfc #9f9 #696 #693 #9c3 #9c6 #9f0 #cf6 #330").split(" ");

const menus: [string, string, string, number][] = [
  ["", "F", "ile", 54], ["", "E", "dit", 58], ["", "V", "iew", 65], ["", "L", "ayout", 81], ["Ob", "j", "ect", 80],
  ["Effe", "c", "ts", 80], ["", "B", "itmaps", 92], ["Te", "x", "t", 61], ["", "T", "able", 70], ["T", "o", "ols", 70], ["", "W", "indow", 94], ["", "H", "elp", 40],
];

const MM = 3.78;
function TopRuler() {
  const marks: React.ReactNode[] = [];
  for (let v = 16; v <= 394; v += 2) {
    const x = Math.round(94.5 + (v - 20) * MM - 46) + 0.5;
    if (x > 1461) break;
    marks.push(<path key={v} d={`M${x} ${v % 20 === 0 ? 20 : v % 10 === 0 ? 25 : 27}V29.500`} stroke="#777" />);
  }
  return (
    <G w={1464} h={31}>
      {marks}
      {Array.from({ length: 18 }, (_, i) => (
        <text key={i} x={95 + i * 75.6 - 46} y="17" textAnchor="middle" fontSize="14" fontFamily={UI} fill="#8a8a8a">{20 + i * 20}</text>
      ))}
      <text x="1385" y="17" fontSize="14" textLength="74" fontFamily={UI} fill="#8a8a8a">millimeters</text>
      <path d="M1000.500 2V30" stroke="#000" strokeDasharray="3 2" />
      <path d="M14.500 12v10M11 14.500h10" stroke="#222" strokeDasharray="2 1.500" /><path d="M16 17l4 4M20.500 17.500v4h-4" stroke="#222" strokeWidth="1.200" />
      <path d="M30 30.500H1464" stroke="#777" />
    </G>
  );
}
function LeftRuler() {
  const marks: React.ReactNode[] = [];
  for (let v = 214; v >= 30; v -= 2) {
    const y = Math.round(358.5 + (200 - v) * MM - 305) + 0.5;
    if (y > 688) break;
    marks.push(<path key={v} d={`M${v % 20 === 0 ? 21 : v % 10 === 0 ? 25 : 27} ${y}H29`} stroke="#777" />);
  }
  return (
    <G w={30} h={689}>
      {marks}
      {Array.from({ length: 8 }, (_, i) => (
        <text key={i} transform={`translate(22 ${52 + i * 75.600}) rotate(-90)`} textAnchor="middle" fontSize="14" fontFamily={UI} fill="#8a8a8a">{200 - i * 20}</text>
      ))}
      <text transform="translate(22 685) rotate(-90)" fontSize="14" textLength="73" fontFamily={UI} fill="#8a8a8a">millimeters</text>
      <path d="M2 103.500H29" stroke="#000" strokeDasharray="3 2" />
    </G>
  );
}

const art: [number, number, string][] = [
  [92.5, 365, "Masukkan Nilai Pertama"],
  [98, 422, "Tahun :"], [234.5, 424, "2015"], [387.5, 425, "Bulan :"], [498.8, 425, "Mei"], [620.5, 427, "Nilai :"], [723, 428, "140"],
  [98.5, 519, "Masukkan Nilai Bulan Berikutnya"],
  [99, 578, "Tahun :"], [236, 579, "2015"], [388.5, 581, "Bulan :"], [501, 581, "Juni"], [622, 583, "Nilai :"], [724.5, 584, "160"],
  [106.5, 672, "Masukkan Masa Prediksi"],
  [107, 725, "Tahun :"], [244, 727, "2016"], [396.5, 729, "Bulan :"], [509, 729, "September"], [730.5, 722, "Nilai :"], [832.5, 723, "?"],
];
const notes: [number, number, string, number][] = [
  [1022, 414, "a = 140", 0], [1022, 443, "b = 160 - 140 = 20", -0.2], [1022, 472, "n = ?", 0.4],
  [1037, 626, "tahun = 2016 - 2015 = 1", 0.05], [1037, 655, "bulan = 9 - 5 = 4", 0.18], [1037, 684, "n = tahun + bulan", 0.65], [1037, 713, "n = 1 * 12 + 4", 0.1], [1037, 742, "n = 16", 0],
  [572.2, 806, "Un = a + (n-1) b", 0.25], [572.2, 835, "Un = 140 + (15) 20", 0], [572.2, 864, "Un = 140 + 300", -0.15], [572.2, 893, "Un = 440", 0],
];

const SpinPair = ({ a, b }: { a: string; b: string }) => (
  <Pair>
    {[a, b].map((t, i) => (
      <PairRow key={i}>
        <Label $mt={1}>{t}</Label><Spring />
        <Spin $w={15} $h={23}><Tri s={9} /></Spin><Spin $w={15} $h={23}><Tri d="up" s={9} /></Spin>
      </PairRow>
    ))}
  </Pair>
);

const TvSection = ({ title, h, ls }: { title: string; h: number; ls: number }) => (
  <TvHead $h={h}>
    <WideTri c="#6f889e" /><Label $ml={9} $mt={3} $size={20} $c="#2b3440" $ls={ls}>{title}</Label><Spring /><Gear />
  </TvHead>
);

export default function App() {
  return (
    <Screen>
      <Global />
      <Taskbar>
        <Slot $w={57} $ml={-1}><G w={24} h={24}><path d="M0 3.500 10 2v9.500H0zM11 1.800 24 0v11.500H11zM0 12.500h10V22L0 20.500zM11 12.500h13V24l-13-1.800z" fill="#fff" /></G></Slot>
        <Slot $w={1}>{null}</Slot>
        {taskIcons.map(t => <TaskCell key={t.n} $open={t.open} $active={t.active}>{t.el}</TaskCell>)}
        <NetCol $ml={9} $w={49}><span>U:</span><span>D:</span></NetCol>
        <NetCol $ml={0} $w={97}><span>29.641 KiB/s</span><span>14.741 KiB/s</span></NetCol>
        <Label $w={79} $c="#bdbdbd" $mt={2} $ls={0.05}>Desktop</Label>
        <Slot $w={12}><G w={12} h={34}><path d="M1 3 6 8 1 13M6 3 11 8 6 13" stroke="#fff" strokeWidth="1.600" /></G></Slot>
        <Slot $w={23} $ml={24}><G w={23} h={24}><circle cx="15" cy="5" r="4" stroke="#fff" strokeWidth="1.800" /><circle cx="7" cy="13" r="3.800" stroke="#fff" strokeWidth="1.800" /><path d="M1 23q0-6 6-6t6 6M10 12q1-3 5-3t7 6" stroke="#fff" strokeWidth="1.800" /></G></Slot>
        <Slot $w={18} $ml={24} $mt={2}><G w={18} h={10}><path d="M0 0 9 9 18 0" stroke="#fff" strokeWidth="1.400" /></G></Slot>
        <Slot $w={25} $ml={16}><G w={25} h={17}><path d="M6 16A5 5 0 0 1 5 6 8 8 0 0 1 19 5q5 1 5.500 6 0 5-5 5z" fill="#8d8d8d" /><path d="M1 10q3-4 7-2l14 8H6q-5 0-5-6z" fill="#dadada" /><path d="M8 16 17 9q7-1 7.500 3-.5 4-5 4z" fill="#fff" /></G></Slot>
        <Slot $w={22} $ml={12}><G w={22} h={19}><path d="M1 6.500h4L9.500 1v17L5 12.500H1z" stroke="#fff" strokeWidth="1.400" /><path d="M12.500 6.500q2 3 0 6M15.500 4q3.500 5.500 0 11" stroke="#fff" strokeWidth="1.400" /><path d="M18.500 2q5 7.500 0 15" stroke="#777" strokeWidth="1.400" /></G></Slot>
        <Slot $w={20} $ml={17}><G w={20} h={19}><path d="M1 19Q1 2 19 1M5.500 19Q6 7 19 6M10 19q1-7.500 9-8" stroke="#cfcfcf" strokeWidth="1.500" /><rect x="15.500" y="15.500" width="3" height="3" fill="#fff" /></G></Slot>
        <Slot $w={25} $ml={12}><G w={25} h={17}><path d="M9 4h13v11H5v-4" stroke="#fff" strokeWidth="1.500" /><rect x="8" y="6" width="12" height="7" fill="#fff" /><path d="M23.500 7v5M2 0v3M6 0v3M1 3.500h6v3q-3 3-6 0zM4 8v5" stroke="#fff" strokeWidth="1.400" /></G></Slot>
        <Label $w={74} $ml={17} $mt={2}>10:12 PM</Label>
        <Slot $w={25} $ml={28}><G w={25} h={24}><path d="M0 0h24v20h-6l-6 4v-4H0z" fill="#fff" /><path d="M4 5h16M4 9.500h16M4 14h9" stroke="#000" strokeWidth="1.500" /><path d="M20 11q0 7-7 8.500 3 5 8 3 5-3 3-8-1-3-4-3.500z" fill="#fff" stroke="#090909" strokeWidth="1.500" /></G></Slot>
        <ShowDesk />
      </Taskbar>

      <TitleBar>
        <Corel />
        <Label $ml={7} $mt={1} $ls={0.27}>CorelDRAW X7 (64-Bit) - Untitled-1</Label>
        <Spring />
        <Slot $w={21} $mt={-3}><G w={21} h={21}><rect x=".75" y=".75" width="19.500" height="19.500" fill="#e9ecf3" stroke="#a3a3a3" strokeWidth="1.500" /><ellipse cx="10.500" cy="7.500" rx="3.600" ry="4.500" fill="#d84315" /><path d="M9 10h3v4.500l5.500 2V19H3v-2.500l6-2z" fill="#d84315" /></G></Slot>
        <Slot $w={16} $ml={37}><G w={16} h={16}><rect y="11.500" width="15" height="3" fill="#000" /></G></Slot>
        <Slot $w={18} $ml={25} $mt={-3}><G w={18} h={18}><path d="M4.500 12H1V1h11v3.500" stroke="#000" strokeWidth="1.200" /><path d="M.5 1.500h12" stroke="#000" strokeWidth="3" /><rect x="5" y="5" width="12" height="11.500" fill="#fff" stroke="#000" strokeWidth="1.200" /><path d="M4.500 5.500h13" stroke="#000" strokeWidth="3" /></G></Slot>
        <Slot $w={18} $ml={24} $mt={-3}><Cross s={17} c="#000" t={1.7} /></Slot>
        <Slot $w={15}>{null}</Slot>
      </TitleBar>

      <MenuBar>
        {menus.map(([a, u, b, w]) => <Label key={b} $w={w}>{a}<u>{u}</u>{b}</Label>)}
      </MenuBar>

      <Bar $h={46} $pt={2}>
        <Slot $w={22} $ml={12} $mt={-2}><G w={22} h={22}><path d="M7 3h8v18H1V9z" fill="#eef0f5" stroke="#8f96a8" strokeWidth="1.600" /><rect x="2" y="12" width="12" height="8" fill={PALE} /><path d="M16.500 0v9M13 2l7 5.500M13 7.500 20 2M12 4.700h9" stroke="#2f9010" strokeWidth="2.400" /></G></Slot>
        <Slot $w={22} $ml={22}><G w={22} h={20}><path d="M0 1h8l2 3h8v3H5L1 19H0z" fill="#26304f" /><path d="M5 8h16l-4 11H1z" fill="#dfe3ec" stroke="#7a839c" strokeWidth="1.300" /></G></Slot>
        <Slot $w={19} $ml={21}><Floppy /></Slot>
        <Slot $w={22} $ml={22}><G w={22} h={22}><path d="M5 1h12v11H5z" fill="#fff" stroke="#9cc4be" strokeWidth="1.500" /><rect x="2" y="12" width="18" height="4" fill="#111" /><path d="M1 12v8h19v-8" stroke="#77778f" strokeWidth="1.500" /><rect x="2" y="16" width="17" height="3.500" fill="#e6dfae" /></G></Slot>
        <Sep $ml={15} />
        <Slot $w={24} $ml={13}><G w={24} h={21}><path d="M7 6 23 16M7 15 23 4" stroke="#b9b9b9" strokeWidth="2.800" /><circle cx="4.500" cy="4.500" r="3.500" stroke="#b9b9b9" strokeWidth="2" /><circle cx="4.500" cy="16.500" r="3.500" stroke="#b9b9b9" strokeWidth="2" /></G></Slot>
        <Slot $w={21} $ml={20}><G w={21} h={21}><path d="M1 1h12v14H1zM8 6h12v14H8z" fill="#eee" stroke="#bcbcbc" strokeWidth="1.400" /><path d="M3 5h6M3 8h4M3 11h4M10.500 10h7M10.500 13h7M10.500 16h7" stroke="#bcbcbc" strokeWidth="1.400" /></G></Slot>
        <Slot $w={23} $ml={21}><G w={23} h={22}><rect y="2" width="17" height="18" fill="#5a4434" /><path d="M4 4q0-4 4-4t4 4v2H4z" fill="#b9d0cc" /><path d="M9 7h9l4 4v10H9z" fill="#fff" stroke="#66667e" strokeWidth="1.400" /><path d="M12 11h5M12 14h8M12 17h8" stroke="#66667e" strokeWidth="1.300" /></G></Slot>
        <Sep $ml={15} />
        <Slot $w={21} $ml={15}><Arrow /></Slot>
        <Slot $w={9} $ml={14} $mt={3}><Tri s={9} /></Slot>
        <Slot $w={21} $ml={19}><Arrow flip c="#bdbdbd" /></Slot>
        <Slot $w={9} $ml={15} $mt={3}><Tri s={9} c="#aaa" /></Slot>
        <Sep $ml={13} />
        <Slot $w={24} $ml={13}><Connect /></Slot>
        <Sep $ml={14} />
        <Slot $w={25} $ml={13}><G w={25} h={24}><path d="M17 2h7v14h-9V7z" fill="#eef0f5" stroke="#8f96a8" strokeWidth="1.500" /><g transform="translate(0 12)"><Floppy s={12} /></g><path d="M4 7h8V4l6 4.500-6 4.500v-3H4z" fill="#c01010" /></G></Slot>
        <Slot $w={25} $ml={18}><G w={25} h={24}><path d="M1 5 5 1h6v13H1z" fill="#eef0f5" stroke="#8f96a8" strokeWidth="1.500" /><g transform="translate(12 12)"><Floppy s={12} /></g><path d="M6 6h8V3l6 4.500-6 5V9H6z" fill="#c01010" /></G></Slot>
        <Slot $w={24} $ml={18}><G w={24} h={23}><path d="M1 1h11l5 5v16H1z" fill="#eef0f5" stroke="#77778f" strokeWidth="1.500" /><path d="M3 8h14V5l7 8-7 7v-2H3z" fill="#26263c" /><text x="3.500" y="16" fontSize="8" fontWeight="700" fontFamily="Open Sans, sans-serif" fill="#fff">PDF</text></G></Slot>
        <Sep $ml={14} />
        <Combo $w={127} $ml={7} $white $pad={8}><Label $mt={2} $ls={-0.8}>100%</Label><Chev s={11} /></Combo>
        <Slot $w={22} $ml={13}><G w={22} h={22}><rect x="1" y="1" width="20" height="17" fill="#9ccbd8" stroke="#77839c" strokeWidth="1.500" /><path d="M6 20.500h10" stroke="#77839c" strokeWidth="2" /><path d="M11 3v13M4 9.500h14M9 5.500 11 3l2 2.500M9 13.500 11 16l2-2.500M6.500 7.500 4 9.500l2.500 2M15.500 7.500 18 9.500l-2.500 2" stroke="#26263c" strokeWidth="1.700" /></G></Slot>
        <Sep $ml={15} />
        <Pressed $ml={7}><G w={24} h={23}><path d="M1 1h22v7H8v14H1z" fill="#c9d3e6" stroke="#77839c" strokeWidth="1.400" /><path d="M10 1v4M14 1v3M18 1v4M1 10h4M1 14h3M1 18h4" stroke="#4d5a78" /></G></Pressed>
        <Slot $w={24} $ml={12}><G w={24} h={24}><path d="M3.500 0v20M8.500 0v20M13.500 0v20M18.500 0v20M0 3.500h23M0 8.500h23M0 13.500h23M0 18.500h10" stroke="#8d93a8" /><Eye x={6} y={11} k={1.05} /></G></Slot>
        <Pressed $ml={13}><G w={24} h={24}><path d="M8.500 0v23M0 9.500h22" stroke="#26263c" strokeWidth="1.500" strokeDasharray="3 2" /><Eye x={10} y={13} k={0.8} /></G></Pressed>
        <Sep $ml={7} />
        <Label $w={63} $ml={14} $mt={3}>Snap To</Label>
        <Slot $w={9} $ml={14} $mt={3}><Tri s={9} /></Slot>
        <Sep $ml={13} />
        <Slot $w={22} $ml={14}><G w={22} h={21}><rect x="1" y="1" width="20" height="19" fill="#fff" stroke="#5f6078" strokeWidth="1.500" /><rect x="1" y="1" width="20" height="4" fill="#6f7088" /><rect x="4" y="11" width="9" height="7" fill="#4b4b80" /><path d="M12 12V9l3-2.500h4V15h-6" fill="#eef" stroke="#77778f" /></G></Slot>
        <Slot $w={19} $ml={22}><G w={19} h={23}>{[1, 9, 17].map(y => <g key={y}><rect x="1" y={y + .5} width="5" height="5" fill="#fff" stroke="#66667e" strokeWidth="1.200" /><path d={`M2 ${y + 2}l2 2 4-5`} stroke="#1f9010" strokeWidth="1.600" /><path d={`M10 ${y + 3}h9`} stroke="#8a8aa0" strokeWidth="1.700" /></g>)}</G></Slot>
        <Sep $ml={17} />
        <Slot $w={20} $ml={15}><G w={20} h={24}><rect x=".7" y=".7" width="18.500" height="14" fill="#e9eaf2" stroke="#55556e" strokeWidth="1.400" /><rect width="20" height="5" fill="#15151f" /><path d="M6 16h8q2 4-3 7 1-3-1-3t-1 1q-3-1-3-5z" fill="#ff3a10" /><path d="M8 16h4l-1 3z" fill="#ffc020" /></G></Slot>
        <Slot $w={9} $ml={15} $mt={3}><Tri s={9} /></Slot>
      </Bar>

      <Bar $h={61} $pt={1}>
        <Combo $w={238} $ml={4} $pad={3}><Label $mt={1} $ls={-0.6}>A4</Label><Chev s={10} /></Combo>
        <IconPairCol $ml={7}>
          <G w={11} h={14}><path d="M1 1.500h9M1 0v3M10 0v3" stroke={INK} strokeWidth="1.200" /><rect x="2" y="4.500" width="7" height="9" fill="#fff" stroke={INK} strokeWidth="1.200" /><rect x="3" y="9" width="5" height="4" fill={PALE} /></G>
          <G w={14} h={11}><path d="M1.500 1v9M0 1h3M0 10h3" stroke={INK} strokeWidth="1.200" /><rect x="5" y="1" width="8" height="9" fill="#fff" stroke={INK} strokeWidth="1.200" /><rect x="6" y="6" width="6" height="3.500" fill={PALE} /></G>
        </IconPairCol>
        <SpinPair a="297.0 mm" b="210.0 mm" />
        <Sep $ml={7} $h={51} />
        <Slot $w={15} $ml={17}><DocPage w={15} h={20} /></Slot>
        <Pressed $ml={17}><DocPage w={20} h={15} /></Pressed>
        <Sep $ml={8} $h={51} />
        <Pressed $ml={7}><G w={24} h={24}>{[[0, 0], [7, 5], [14, 9]].map(([x, y]) => <g key={x}><rect x={x + .7} y={y + .7} width="9" height="13.500" fill="#fff" stroke={INK} strokeWidth="1.400" /><rect x={x + 1.500} y={y + 8} width="7.500" height="5.500" fill={PALE} /></g>)}</G></Pressed>
        <Slot $w={24} $ml={12} $mt={5}><G w={24} h={19}>{[[0, 0, 6, 18], [8.500, 9, 7, 9], [18, 6, 5.500, 12]].map(([x, y, w, h]) => <rect key={x} x={x + .7} y={y + .7} width={w - 1} height={h - .5} fill={PALE} stroke={INK} strokeWidth="1.300" />)}</G></Slot>
        <Sep $ml={14} $h={51} />
        <Label $w={44} $ml={9} $mt={2}>Units:</Label>
        <Combo $w={136} $ml={2} $pad={4}><Label $mt={1}>millimeters</Label><Chev s={10} /></Combo>
        <Sep $ml={7} $h={51} />
        <Slot $w={13} $ml={10}><G w={13} h={13}><rect x="4" y="4" width="5" height="5" stroke={INK} strokeWidth="1.300" /><path d="M6.500-.5 9 2H4zM6.500 13.500 9 11H4zM-.5 6.500 2 4v5zM13.500 6.500 11 4v5z" fill="#33334d" /></G></Slot>
        <NudgeBox><Label>0.1 mm</Label><SpinCol><Spin $w={27} $h={17}><Tri d="up" s={10} /></Spin><Spin $w={27} $h={17}><Tri s={10} /></Spin></SpinCol></NudgeBox>
        <Sep $ml={7} $h={51} />
        <IconPairCol $ml={8}>
          {["M8 8l5 5M13 8l-5 5", "M8 8l2.500 3L13 8M10.500 11v3"].map(d => <G key={d} w={14} h={14}><rect x="1" y="1" width="3.500" height="7" stroke={INK} strokeWidth="1.300" /><rect x="6" y="2.500" width="3" height="6" stroke={INK} strokeWidth="1.300" /><path d={d} stroke="#222" strokeWidth="1.300" /></G>)}
        </IconPairCol>
        <SpinPair a="5.0 mm" b="5.0 mm" />
        <Sep $ml={7} $h={51} />
        <Pressed $ml={7}><G w={24} h={24}><rect x="4" y="3" width="13" height="13" fill="#fff" stroke={INK} strokeWidth="1.200" /><rect x="4.500" y="9" width="12" height="6.500" fill={PALE} /><path d="M2 1h3v3H2zM9 1h3v3H9zM16 1h3v3h-3zM2 8h3v3H2zM2 15h3v3H2zM9 15h3v3H9zM16 8h3v3h-3z" fill="#33334d" /><path d="M14 10v11l3-2.500 2 5 2.500-1-2-4.500h4z" fill="#fff" stroke={INK} strokeWidth="1.200" /></G></Pressed>
        <Sep $ml={7} $h={51} />
        <Slot $w={28} $ml={20}><PlusRing /></Slot>
      </Bar>

      <Work>
        <Toolbox>
          {tools.map((t, i) => t ? <ToolCell key={i} $on={t.on}>{t.el}{t.fly && <Flyout />}</ToolCell> : <ToolSep key={i} />)}
          <Slot $w={28} $mt={16}><PlusRing /></Slot>
          <Slot $w={28} $mt={29}><Dbl w={17} /></Slot>
        </Toolbox>

        <Center>
          <Palette>
            <Slot $w={2} $ml={5}><Grip /></Slot>
            <Slot $w={6} $ml={12}><Tri d="right" s={10} /></Slot>
            <Slot $w={20} $ml={9}><Pipette s={20} /></Slot>
            <Slot $w={12} $ml={8}><Chev d="left" s={14} c="#d5d5d5" t={2.5} /></Slot>
            <Swatches>
              <Swatch $c="#fff"><G w={24} h={24}><path d="M1 1 23 23M23 1 1 23" stroke="#333" /></G></Swatch>
              {swatches.map((c, i) => <Swatch key={i} $c={c} $sel={c === "#f9c"} />)}
            </Swatches>
            <Slot $w={12} $ml={6}><Chev d="right" s={14} c="#adadad" t={2.2} /></Slot>
            <Slot $w={15} $ml={13}><Dbl w={15} /></Slot>
          </Palette>
          <Tabs>
            <Tab $w={166} $bg="#d7d7d7"><Label $ls={-0.03}>Welcome Screen</Label></Tab>
            <Tab $w={114} $bg="#cfe3ff"><Label $ls={0}>Untitled-1</Label></Tab>
            <Tab $w={28} $bg="#d7d7d7" $pad={5}><G w={17} h={17}><path d="M8.500 0v17M0 8.500h17" stroke="#adadad" strokeWidth="3" /></G></Tab>
          </Tabs>
          <RulerRow><TopRuler /></RulerRow>
          <Body>
            <VRuler><LeftRuler /></VRuler>
            <View>
              <CanvasRow>
                <Canvas>
                  <Page />
                  {art.map(([x, y, t], i) => <Art key={i} $x={x} $y={y}>{t}</Art>)}
                  <Box $x={835} $y={397} />
                  <Box $x={837} $y={552} />
                  {notes.map(([x, y, t, ls]) => <Note key={t} $x={x} $y={y} $ls={ls}>{t}</Note>)}
                  <Note $x={823.5} $y={761} $black>440</Note>
                  <Ink width={1500} height={1000} fill="none" stroke="#ff0000" strokeLinecap="round" strokeLinejoin="round">
                    <path d="M594 394.500 583 405 572 421" strokeWidth="4.500" /><path d="M570.500 411.500 570.500 420 580 408" strokeWidth="6" />
                    <path d="M682 724 686.500 731 690 718 698 706.500" strokeWidth="4.500" /><path d="M682.500 724.500 686.500 730" strokeWidth="5.500" />
                    <path d="M875.500 686 875 698 869 706.500 893 719.500M869 706Q884 689 903 687.500" strokeWidth="4.500" /><path d="M893 719.500h.5M870 705.500 880 697M901 688h2" strokeWidth="6.500" />
                  </Ink>
                </Canvas>
                <VScroll $w={25}>
                  <ScrollBtn $w={25} $h={28}><Chev d="up" s={11} t={2} c="#505050" /></ScrollBtn>
                  <Thumb $w={24} $h={235} $mt={158} />
                  <Spring />
                  <ScrollBtn $w={25} $h={26}><Chev s={11} t={2} c="#505050" /></ScrollBtn>
                </VScroll>
              </CanvasRow>
              <BottomRow>
                <PageNav>
                  <Slot $w={10} $ml={7}><PageAdd /></Slot>
                  <Slot $w={8} $ml={17}><G w={8} h={10}><path d="M1 0v10" stroke="#777" strokeWidth="1.400" /><path d="M8 0v10L3 5z" fill="#777" /></G></Slot>
                  <Slot $w={6} $ml={20}><Tri d="left" c="#777" s={10} /></Slot>
                  <Label $w={83} $ml={34} $mt={1} $ls={0.05}>1 of 1</Label>
                  <Slot $w={6} $ml={-1}><Tri d="right" c="#777" s={10} /></Slot>
                  <Slot $w={8} $ml={18}><G w={8} h={10}><path d="M7 0v10" stroke="#777" strokeWidth="1.400" /><path d="M0 0v10L5 5z" fill="#777" /></G></Slot>
                  <Slot $w={10} $ml={17}><PageAdd /></Slot>
                  <PageTab><Label $ls={0.2}>Page 1</Label></PageTab>
                  <PageEdge width={13} height={25}><path d="M.5 0 12.500 13V25" stroke="#8f8f8f" fill="none" /></PageEdge>
                  <Spring />
                  <Grip />
                </PageNav>
                <ScrollBtn $w={25} $h={26}><Chev d="left" s={11} t={2} c="#505050" /></ScrollBtn>
                <Thumb $w={356} $h={24} $ml={193} />
                <Slot $w={92}>{null}</Slot>
                <ScrollBtn $w={26} $h={26}><Chev d="right" s={11} t={2} c="#505050" /></ScrollBtn>
                <Slot $w={25}><G w={12} h={13}><circle cx="5" cy="5" r="4" stroke={INK} strokeWidth="1.300" fill="#fff" /><circle cx="5" cy="5" r="1.500" stroke={INK} /><path d="M8 8l4 4" stroke="#33334d" strokeWidth="2" /></G></Slot>
              </BottomRow>
            </View>
          </Body>
          <Rule />
          <Tray>
            <Slot $w={12} $ml={8}><Cross s={12} c="#b5b5b5" t={1.5} /></Slot>
            <TrayTab><Connect s={22} /><Label $ml={7} $mt={1}>Tray</Label></TrayTab>
            <Slot $w={25} $ml={28}><PlusRing s={25} /></Slot>
          </Tray>
        </Center>
        <Split />

        <Docker>
          <DockHead>
            <Label $ls={-0.05}>Object Manager</Label><Spring />
            <Slot $w={14}><G w={14} h={12}><path d="M0 0v12l7-6zM7 0v12l7-6z" fill="#adadad" /></G></Slot>
            <Slot $w={13} $ml={12}><Cross s={12} t={1.6} /></Slot>
          </DockHead>
          <DockBody>
            <DockMain>
              <DockTools>
                <Layers kind="check" />
                <Pressed $ml={14}><Layers kind="edit" /></Pressed>
                <Slot $w={37} $ml={2}><Layers kind="eye" /><Flyout $r={1} $b={-8} /></Slot>
                <PageInfo><Label $ls={0.15} $ml={-2}>Page 1</Label><Label $ls={0.1} $ml={-2}>Layer 1</Label></PageInfo>
                <Slot $w={7} $ml={-2} $mt={-22}><Tri d="right" s={13} /></Slot>
              </DockTools>
              <ListBox>
                <ListCol>
                  {Array.from({ length: 6 }, (_, i) => (
                    <ListRow key={i}>
                      <Slot $w={16}><G w={16} h={28}><path d="M1 15 8 2.500 15 15" stroke="#000" strokeWidth="3.400" /><path d="M4 11.500h8" stroke="#000" strokeWidth="2.400" /></G></Slot>
                      {i < 5 && <Label $ml={3} $mt={2} $ls={-0.14}>Artistic Text: Arial (Normal) (ENU)</Label>}
                    </ListRow>
                  ))}
                  <Spring />
                  <GroupRow><G w={11} h={11}><rect x="1" y="2" width="9" height="9" fill="#fff" stroke="#223" strokeWidth="1.300" /><path d="M3 6.500h5" stroke="#223" strokeWidth="1.300" /></G></GroupRow>
                  <HScrollRow><ScrollBtn $w={26} $h={25}><Chev d="left" s={11} t={2} c="#505050" /></ScrollBtn></HScrollRow>
                </ListCol>
                <VScroll $w={25}>
                  <ScrollBtn $w={25} $h={28}><Chev d="up" s={11} t={2} c="#505050" /></ScrollBtn>
                  <Thumb $w={24} $h={200} $mt={77} />
                </VScroll>
              </ListBox>
              <DockFoot><Layers kind="add" /></DockFoot>
            </DockMain>
            <SideTabs>
              <SideTab $h={105}>
                <G w={24} h={21}><path d="M2 1v15l3.500-3 3 7 3-1.500-3-6.500h5z" fill="#fff" stroke={INK} strokeWidth="1.400" /><path d="M15 4q0-3.500 4-3.500t4 3.500q0 2-3 4v3M20 13v3" stroke={INK} strokeWidth="2.200" /></G>
                <Upright>Hints</Upright>
              </SideTab>
              <SideTab $h={220} $on>
                <G w={22} h={22}><rect x="2" y="2" width="8" height="18" stroke={INK} strokeDasharray="2 1" /><path d="M0 0h4v4H0zM8 0h4v4H8zM8 9h4v4H8zM16 5h5v5h-5zM14 12h5v5h-5zM17 18h4v4h-4z" fill="#fff" stroke={INK} strokeWidth="1.300" /></G>
                <Upright>Object M</Upright>
              </SideTab>
            </SideTabs>
          </DockBody>
        </Docker>
      </Work>

      <Status>
        <Label $w={170} $ls={0.05}>( 271.757, 186.751 )</Label>
        <PlayBox><Tri d="right" s={10} /></PlayBox>
        <Slot $w={22} $ml={1044} $mt={-2}><G w={22} h={24}><rect x="1" y="1" width="20" height="18" fill="#dde3f0" stroke="#77839c" strokeWidth="1.500" /><rect x="4" y="3" width="14" height="5" fill="#c8747c" /><rect x="4" y="8" width="14" height="4" fill="#6fae7c" /><rect x="4" y="12" width="14" height="5" fill="#6f94c8" /><ellipse cx="11" cy="10" rx="4.500" ry="5" fill="#fff" /><ellipse cx="11" cy="10" rx="2.300" ry="3" stroke="#222" strokeWidth="1.500" /><path d="M5 22.500h12" stroke="#77839c" strokeWidth="2" /></G></Slot>
        <Slot $w={16} $ml={19} $mt={-4}><G w={16} h={22}><path d="M7 0v6M7 2 1 9l6 6 6-6z" fill="#fff" stroke={INK} strokeWidth="1.400" /><path d="M1.500 9.500h11L7 15zM13 8l2.500 1v5H14z" fill="#e87810" /></G></Slot>
        <Slot $w={27} $ml={6}><G w={27} h={27}><rect x="1" y="1" width="25" height="25" fill="#fff" stroke="#777" strokeWidth="1.300" /><path d="M1 1 26 26M26 1 1 26" stroke="#222" strokeWidth="1.700" /></G></Slot>
        <Label $ml={3} $mt={3} $ls={0}>None</Label>
      </Status>

      <TvHandle width={38} height={82}><path d="M38 1H6L1 6V56L6 61 38 80z" fill="#fff" stroke="#d5dbe1" /><path d="M16.500 19 24 26 16.500 33" stroke="#6f889e" strokeWidth="3" fill="none" /></TvHandle>
      <Tv>
        <TvTop>
          <TvBrand>
            <TvLogo s={60} />
            <TvNames>
              <TvName><b>Team</b>Viewer</TvName>
              <TvLicense>Free license (non-commercial use only)</TvLicense>
            </TvNames>
            <Slot $w={19} $mt={24}><Cross s={18} c="#fff" t={2.4} /></Slot>
          </TvBrand>
          <TvTools>
            <Slot $w={25}><Cam /></Slot>
            <Slot $w={25} $ml={26}><Headset /></Slot>
            <Slot $w={25} $ml={26}><Chat /></Slot>
            <Slot $w={23} $ml={27}><G w={22} h={23}><path d="M4 17H1V1h14v3" stroke="#fff" strokeWidth="2" /><path d="M6 5h15v17H6z" fill="#fff" /><path d="M9 9.500h9M9 13h9M9 16.500h9M3 5h2M3 9h2M3 13h2" stroke="#0064c8" strokeWidth="1.400" /></G></Slot>
            <Slot $w={24} $ml={28}><Brush /></Slot>
            <Slot $w={18} $ml={30}><Dbl left w={18} c="#d6e6f6" /></Slot>
          </TvTools>
        </TvTop>
        <TvSection title="Session list" h={43} ls={-0.1} />
        <TvSession>
          <G w={27} h={27}><rect x=".75" y=".75" width="25.500" height="25.500" fill="#fff" stroke="#8fa3b5" strokeWidth="1.500" /><g transform="translate(2 4)"><Person w={23} h={22} c="#9badbd" /></g></G>
          <Label $ml={8} $size={16} $ls={0.05} $w={178}>ZAMRI (1 440 894 015)</Label>
          <WideTri c="#444" />
          <Spring />
          <G w={19} h={19}><path d="M0 0 18 7 12 10 19 17 17 19 10 12 7 18z" fill="#4fa6ff" /></G>
        </TvSession>
        <TvSection title="Audio" h={42} ls={-0.1} />
        <TvAudio>
          <Tile><FaMicrophone size={25} color="#eef6ff" /></Tile>
          <SliderCol $mr={31}><Label $size={15} $ls={-0.05}>Microphone</Label><Track $fill={0} $at={80} /></SliderCol>
          <Tile><G w={26} h={20}><path d="M0 6h5l8-6v20l-8-6H0z" fill="#fff" /><path d="M16 6q3 4 0 8M19 3q6 7 0 14" stroke="#d6eaff" strokeWidth="2" /></G></Tile>
          <SliderCol $mr={0}><Label $size={15} $ls={-0.05}>Speakers</Label><Track $fill={41} $at={50} /></SliderCol>
        </TvAudio>
        <TvSection title="Video - ZAMRI (1 440 894 ..." h={42} ls={0.2} />
        <TvVideo>
          <Person w={118} h={116} c="#c6ced9" />
          <Person w={118} h={116} c="#c6ced9" />
          <CamOff><G w={26} h={24}><g transform="translate(0 5)"><Cam w={24} /></g><path d="M1 23 24 1" stroke="#c94545" strokeWidth="3" /></G></CamOff>
        </TvVideo>
        <TvFoot><Label $ls={-0.2}><u>www.teamviewer.com</u></Label></TvFoot>
      </Tv>
    </Screen>
  );
}
